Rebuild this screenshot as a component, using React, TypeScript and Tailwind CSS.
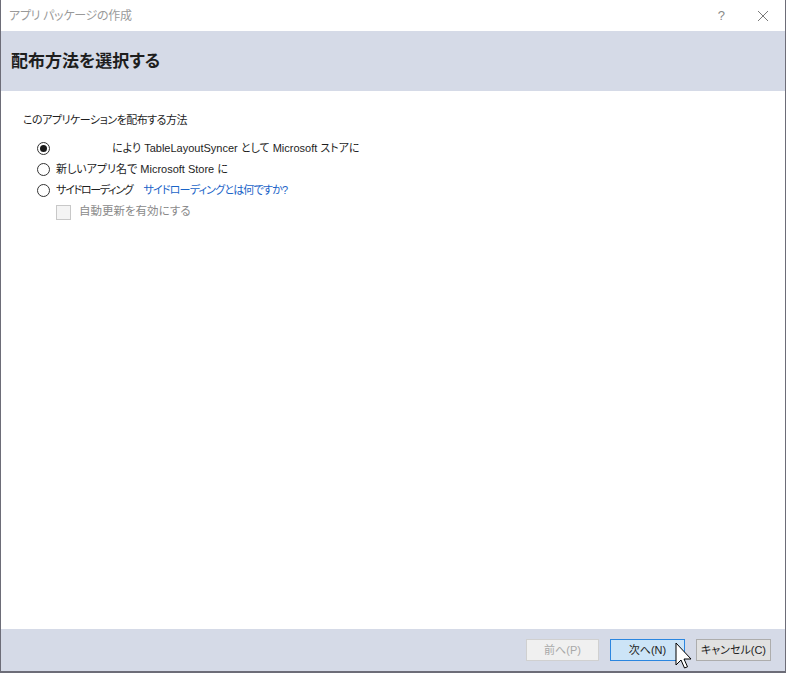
import React from "react";

const font = {
  fontFamily: '"Liberation Sans", "Noto Sans CJK JP", sans-serif',
  fontFeatureSettings: '"palt"',
};

function Radio({ checked }: { checked?: boolean }) {
  return (
    <span className="w-[13px] h-[13px] rounded-full border border-[#333] bg-white flex items-center justify-center shrink-0">
      {checked && <span className="w-[7px] h-[7px] rounded-full bg-[#1a1a1a]" />}
    </span>
  );
}

export default function App() {
  return (
    <div className="w-[786px] h-[673px] bg-[#6d6d78] relative overflow-hidden" style={font}>
      <div className="absolute left-[1px] top-0 w-[784px] h-[671px] flex flex-col bg-white">
        {/* title bar */}
        <div className="h-[31px] shrink-0 flex items-center bg-white">
          <span className="ml-[8px] text-[12px] tracking-[-0.3px] text-[#9a9a9a] leading-none">アプリ パッケージの作成</span>
          <span className="ml-auto text-[13px] text-[#8a8a8a] leading-none mr-[32px]">?</span>
          <svg width="12" height="12" viewBox="0 0 12 12" className="mr-[16px]">
            <path d="M1 1L11 11M11 1L1 11" stroke="#7a7a7a" strokeWidth="1" />
          </svg>
        </div>
        {/* header */}
        <div className="h-[60px] shrink-0 bg-[#d5dae7] flex items-center">
          <span className="ml-[10px] text-[17px] font-bold text-[#1e1e1e] leading-none">配布方法を選択する</span>
        </div>
        {/* body */}
        <div className="flex-1 bg-white pl-[22px] pt-[21px] text-[11px] text-[#1e1e1e]">
          <div className="leading-[16px] tracking-[-0.5px]">このアプリケーションを配布する方法</div>
          <div className="mt-[12px] flex flex-col gap-[5px] pl-[14px]">
            <div className="flex items-center h-[16px]">
              <Radio checked />
              <span className="ml-[62px] whitespace-nowrap">により TableLayoutSyncer として Microsoft ストアに</span>
            </div>
            <div className="flex items-center h-[16px]">
              <Radio />
              <span className="ml-[6px] whitespace-nowrap">新しいアプリ名で Microsoft Store に</span>
            </div>
            <div className="flex items-center h-[16px]">
              <Radio />
              <span className="ml-[6px] whitespace-nowrap tracking-[-1.3px]">サイドローディング</span>
              <span className="ml-[11px] text-[#1a64c8] whitespace-nowrap tracking-[-0.8px]">サイドローディングとは何ですか?</span>
            </div>
            <div className="flex items-center h-[16px] pl-[19px] mt-[1px]">
              <span className="w-[15px] h-[15px] border border-[#c8c8c8] bg-[#f4f4f4] shrink-0" />
              <span className="ml-[8px] text-[#8a8a8a] whitespace-nowrap text-[11.5px]">自動更新を有効にする</span>
            </div>
          </div>
        </div>
        {/* footer */}
        <div className="h-[42px] shrink-0 bg-[#d5dae7] flex items-center justify-end pr-[14px] gap-[11px] text-[11px] whitespace-nowrap">
          <div className="w-[73px] h-[22px] border border-[#d0d0d0] bg-[#f0f0f0] text-[#a8a8a8] flex items-center justify-center">前へ(P)</div>
          <div className="w-[75px] h-[22px] border border-[#2b86e0] bg-[#cce4f7] text-[#1e1e1e] flex items-center justify-center">次へ(N)</div>
          <div className="w-[75px] h-[22px] border border-[#adadad] bg-[#e1e1e1] text-[#1e1e1e] flex items-center justify-center">キャンセル(C)</div>
        </div>
      </div>
      {/* cursor */}
      <svg className="absolute left-[675px] top-[642px]" width="20" height="30" viewBox="0 0 20 30">
        <path d="M1 1 L1 23 L6 18 L9.5 26 L12.5 24.8 L9 17 L16 17 Z" fill="#ffffff" stroke="#000000" strokeWidth="1" strokeLinejoin="round" />
      </svg>
    </div>
  );
}
